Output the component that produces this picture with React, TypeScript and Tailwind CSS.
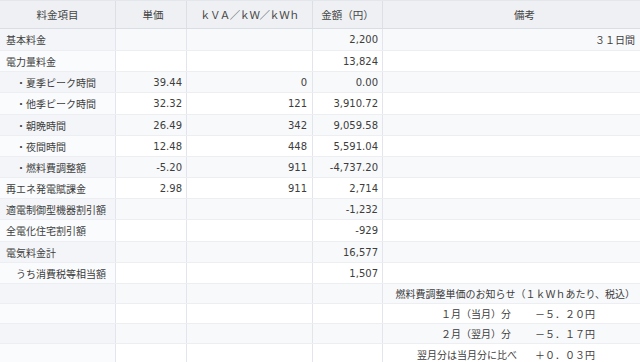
import React from "react";

type Row = {
  label: string;
  indent?: boolean;
  price?: string;
  qty?: string;
  amount?: string;
  note?: React.ReactNode;
  h: string;
};

const JP = { fontFamily: '"Noto Sans CJK JP", "Noto Sans", sans-serif' };

const rows: Row[] = [
  { label: "基本料金", amount: "2,200", note: <span>３１日間</span>, h: "h-[22px]" },
  { label: "電力量料金", amount: "13,824", h: "h-[21px]" },
  { label: "・夏季ピーク時間", indent: true, price: "39.44", qty: "0", amount: "0.00", h: "h-[21px]" },
  { label: "・他季ピーク時間", indent: true, price: "32.32", qty: "121", amount: "3,910.72", h: "h-[22px]" },
  { label: "・朝晩時間", indent: true, price: "26.49", qty: "342", amount: "9,059.58", h: "h-[21px]" },
  { label: "・夜間時間", indent: true, price: "12.48", qty: "448", amount: "5,591.04", h: "h-[21px]" },
  { label: "・燃料費調整額", indent: true, price: "-5.20", qty: "911", amount: "-4,737.20", h: "h-[21px]" },
  { label: "再エネ発電賦課金", price: "2.98", qty: "911", amount: "2,714", h: "h-[21px]" },
  { label: "適電制御型機器割引額", amount: "-1,232", h: "h-[21px]" },
  { label: "全電化住宅割引額", amount: "-929", h: "h-[22px]" },
  { label: "電気料金計", amount: "16,577", h: "h-[21px]" },
  { label: "うち消費税等相当額", indent: true, amount: "1,507", h: "h-[21px]" },
  {
    label: "",
    note: <span>燃料費調整単価のお知らせ（１ｋＷｈあたり、税込）</span>,
    h: "h-[20px]",
  },
  {
    label: "",
    note: (
      <span className="flex pr-[40px]">
        <span className="mr-[24px]">１月（当月）分</span>
        <span>－５．２０円</span>
      </span>
    ),
    h: "h-[20px]",
  },
  {
    label: "",
    note: (
      <span className="flex pr-[40px]">
        <span className="mr-[24px]">２月（翌月）分</span>
        <span>－５．１７円</span>
      </span>
    ),
    h: "h-[20px]",
  },
  {
    label: "",
    note: (
      <span className="flex pr-[40px]">
        <span className="mr-[18px]">翌月分は当月分に比べ</span>
        <span>＋０．０３円</span>
      </span>
    ),
    h: "h-[21px]",
  },
];

const NUM = { fontFamily: '"DejaVu Sans", "Noto Sans", sans-serif' };

export default function App() {
  return (
    <div className="w-[640px] h-[362px] overflow-hidden bg-white text-[10px] text-[#3d3d3d]" style={JP}>
      {/* header */}
      <div className="flex h-[29px] border-t border-b border-t-[#e3e6eb] border-b-[#d9dde4] bg-[#eef0f3] text-[10.5px] text-[#444]">
        <div className="w-[116px] flex items-center justify-center border-r border-[#dcdfe6]">料金項目</div>
        <div className="w-[71px] flex items-center justify-center pl-[4px] border-r border-[#dcdfe6]">単価</div>
        <div className="w-[126px] flex items-center justify-center border-r border-[#dcdfe6]">
          <span className="tracking-[-0.6px]">ｋＶＡ／ｋＷ／ｋＷｈ</span>
        </div>
        <div className="w-[70px] flex items-center justify-center border-r border-[#dcdfe6]">金額（円）</div>
        <div className="flex-1 flex items-center justify-center pl-[26px]">備考</div>
      </div>
      {rows.map((r, i) => {
        const odd = i % 2 === 0;
        return (
          <div
            key={i}
            className={`flex ${r.h} border-b border-[#eceef2] ${odd ? "bg-[#f8f9fb]" : "bg-white"}`}
          >
            <div
              className={`w-[116px] flex items-center border-r border-[#e2e5eb] ${
                r.indent ? "pl-[16px]" : "pl-[6px]"
              } ${odd ? "bg-[#f4f5f8]" : "bg-[#fafbfc]"} whitespace-nowrap`}
            >
              {r.label}
            </div>
            <div
              className="w-[71px] flex items-center justify-end pr-[4px] border-r border-[#e2e5eb]"
              style={NUM}
            >
              {r.price}
            </div>
            <div
              className="w-[126px] flex items-center justify-end pr-[5px] border-r border-[#e2e5eb]"
              style={NUM}
            >
              {r.qty}
            </div>
            <div
              className="w-[70px] flex items-center justify-end pr-[4px] border-r border-[#e2e5eb]"
              style={NUM}
            >
              {r.amount}
            </div>
            <div className="flex-1 flex items-center justify-end pr-[5px] whitespace-nowrap">
              {r.note}
            </div>
          </div>
        );
      })}
    </div>
  );
}
